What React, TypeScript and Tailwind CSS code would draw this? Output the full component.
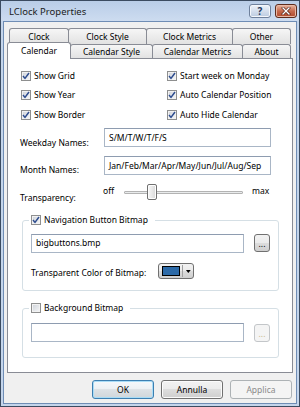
import React from "react";

function CheckBox({ checked = true }: { checked?: boolean }) {
  return (
    <span className="flex w-[10px] h-[10px] shrink-0 items-center justify-center border border-[#8e8f8f] bg-linear-to-br from-[#cdd1d8] to-[#f7f8f9] shadow-[inset_0_0_0_1px_#f2f2f2]">
      {checked && (
        <svg width="8" height="8" viewBox="0 0 8 8">
          <path d="M1 4 L3 6.4 L7 1" fill="none" stroke="#2d4c8e" strokeWidth="1.5" />
        </svg>
      )}
    </span>
  );
}

function Check({ label, checked = true }: { label: string; checked?: boolean }) {
  return (
    <div className="flex items-center gap-[3px]">
      <CheckBox checked={checked} />
      <span className="text-[8.5px] leading-[12px] whitespace-nowrap">{label}</span>
    </div>
  );
}

function Tab({ label, w, first }: { label: string; w: number; first?: boolean }) {
  return (
    <div
      style={{ width: w }}
      className={`${first ? "" : "-ml-px"} h-[16px] shrink-0 flex items-center justify-center rounded-t-[3px] border border-b-0 border-[#898c95] bg-linear-to-b from-[#f6f6f6] to-[#e2e2e2] text-[8.5px] leading-[12px]`}
    >
      {label}
    </div>
  );
}

function TabLow({ label, w }: { label: string; w: number }) {
  return (
    <div
      style={{ width: w }}
      className="-ml-px mt-[2px] h-[14px] shrink-0 flex items-center justify-center rounded-t-[3px] border border-b-0 border-[#898c95] bg-linear-to-b from-[#f6f6f6] to-[#e2e2e2] text-[8.5px] leading-[12px]"
    >
      {label}
    </div>
  );
}

function TextBox({ value, w, h = 19 }: { value?: string; w: number; h?: number }) {
  return (
    <div
      style={{ width: w, height: h }}
      className="shrink-0 flex items-center overflow-hidden whitespace-nowrap bg-white border border-[#a9b6c6] border-t-[#8e9cb0] pl-[4px] text-[8.5px] leading-[12px]"
    >
      {value}
    </div>
  );
}

function DotsButton({ disabled }: { disabled?: boolean }) {
  return (
    <div
      className={`w-[16px] h-[18px] shrink-0 flex items-end justify-center pb-[3px] rounded-[3px] border text-[8.5px] leading-[8px] ${
        disabled
          ? "border-[#c3c6c9] bg-[#f4f4f4] text-[#c9b98a]"
          : "border-[#707070] bg-[linear-gradient(#f2f2f2_0%,#ebebeb_50%,#dddddd_50%,#cfcfcf_100%)] text-black"
      }`}
    >
      ...
    </div>
  );
}

function Button({ label, def, disabled }: { label: string; def?: boolean; disabled?: boolean }) {
  return (
    <div
      className={`w-[62px] h-[19px] flex items-center justify-center rounded-[3px] border text-[8.5px] leading-[12px] ${
        disabled
          ? "border-[#adb2b5] bg-[#f4f4f4] text-[#8a8a8a]"
          : def
          ? "border-[#3c7fb1] bg-[linear-gradient(#f4f8fb_0%,#ecf0f3_50%,#dde2e6_50%,#d0d6da_100%)] shadow-[inset_0_0_0_1px_#a9dcf6]"
          : "border-[#707070] bg-[linear-gradient(#f2f2f2_0%,#ebebeb_50%,#dddddd_50%,#cfcfcf_100%)] shadow-[inset_0_0_0_1px_#fbfbfb]"
      }`}
    >
      {label}
    </div>
  );
}

export default function App() {
  return (
    <div className="w-[300px] h-[407px] flex flex-col overflow-hidden border border-[#3b4b60] bg-[#c4d5eb] font-['Noto_Sans',sans-serif] text-black">
      {/* Title bar */}
      <div className="h-[20px] shrink-0 flex items-center pl-[8px] pr-[2px] bg-linear-to-b from-[#b9cde7] to-[#cddcf0]">
        <span className="mt-[2px] text-[9.5px] leading-[14px] text-[#1b1b1b]">LClock Properties</span>
        <div className="ml-auto flex gap-[4px]">
          <div className="w-[22px] h-[14px] flex items-center justify-center rounded-[3px] border border-[#6f819c] bg-linear-to-b from-[#eef3fa] to-[#bccbe0] shadow-[inset_0_0_0_1px_#f4f7fb]">
            <span className="text-[10px] leading-[10px] font-bold text-[#27395c]">?</span>
          </div>
          <div className="w-[22px] h-[14px] flex items-center justify-center rounded-[3px] border border-[#5e2c1d] bg-linear-to-b from-[#e8b8a3] via-[#c66a4d] to-[#b04a2d] shadow-[inset_0_0_0_1px_#e9b9a5]">
            <svg width="10" height="8" viewBox="0 0 10 8">
              <path d="M2 1 L8 7 M8 1 L2 7" stroke="#4a1a10" strokeWidth="2.6" strokeLinecap="square" />
              <path d="M2 1 L8 7 M8 1 L2 7" stroke="#ffffff" strokeWidth="1.4" strokeLinecap="square" />
            </svg>
          </div>
        </div>
      </div>

      {/* Client */}
      <div className="flex-1 flex px-[2px] pb-[2px]">
        <div className="flex-1 flex flex-col border border-[#6f8db5] bg-[#f0f0f0] px-[3px] pt-[6px]">
          {/* Tabs */}
          <div className="h-[30px] flex flex-col">
            <div className="flex ml-[2px]">
              <Tab label="Clock" w={60} first />
              <Tab label="Clock Style" w={79} />
              <Tab label="Clock Metrics" w={87} />
              <Tab label="Other" w={59} />
            </div>
            <div className="relative z-10 flex items-start -mt-[2px]">
              <div className="w-[64px] h-[17px] shrink-0 flex items-center justify-center pb-[1px] rounded-t-[3px] border border-b-0 border-[#898c95] bg-white text-[8.5px] leading-[12px]">
                Calendar
              </div>
              <TabLow label="Calendar Style" w={83} />
              <TabLow label="Calendar Metrics" w={91} />
              <TabLow label="About" w={49} />
            </div>
          </div>

          {/* Panel */}
          <div className="h-[315px] shrink-0 flex flex-col border border-[#898c95] bg-white">
            <div className="grid grid-cols-[146px_1fr] auto-rows-[19.5px] items-center pl-[13px] pt-[7px]">
              <Check label="Show Grid" />
              <Check label="Start week on Monday" />
              <Check label="Show Year" />
              <Check label="Auto Calendar Position" />
              <Check label="Show Border" />
              <Check label="Auto Hide Calendar" />
            </div>

            <div className="flex mt-[3.5px] pl-[12px]">
              <span className="w-[84px] pt-[9px] text-[8.5px] leading-[12px]">Weekday Names:</span>
              <TextBox value="S/M/T/W/T/F/S" w={167} />
            </div>
            <div className="flex mt-[7px] pl-[12px]">
              <span className="w-[84px] pt-[8px] text-[8.5px] leading-[12px]">Month Names:</span>
              <TextBox value="Jan/Feb/Mar/Apr/May/Jun/Jul/Aug/Sep" w={167} />
            </div>
            <div className="flex mt-[8px] pl-[12px] h-[16px]">
              <span className="w-[84px] pt-[8px] text-[8.5px] leading-[12px]">Transparency:</span>
              <span className="-ml-[1px] w-[21px] mt-[1px] text-[8.5px] leading-[12px]">off</span>
              <div className="relative w-[119px] h-[16px]">
                <div className="absolute left-0 right-0 top-[7px] h-[3px] rounded-[1px] border border-[#b3b3b3] bg-[#e9ebec]" />
                <div className="absolute left-[23px] top-0 w-[10px] h-[16px] rounded-[2px] border border-[#707070] bg-linear-to-r from-[#f8f8f8] to-[#d9d9d9] shadow-[inset_0_0_0_1px_#fdfdfd]" />
              </div>
              <span className="ml-[9px] mt-[1px] text-[8.5px] leading-[12px]">max</span>
            </div>

            {/* Group 1 */}
            <fieldset className="mt-[14px] ml-[14px] mr-[13px] border border-[#d5dfe5] rounded-[3px]">
              <legend className="ml-[6px] pl-[2px] pr-[7px]">
                <Check label="Navigation Button Bitmap" />
              </legend>
              <div className="flex items-center pl-[8px] mt-[7.5px]">
                <TextBox value="bigbuttons.bmp" w={213} />
                <div className="ml-[10px]">
                  <DotsButton />
                </div>
              </div>
              <div className="flex items-center pl-[8px] mt-[10.5px] pb-[11px]">
                <span className="w-[127px] mt-[3px] text-[8.5px] leading-[12px] whitespace-nowrap">Transparent Color of Bitmap:</span>
                <div className="w-[36px] h-[16px] flex items-center rounded-[3px] border border-[#707070] bg-[linear-gradient(#f2f2f2_0%,#ebebeb_50%,#dddddd_50%,#cfcfcf_100%)]">
                  <div className="ml-[3px] w-[19px] h-[10px] border border-black bg-[#2c6aa8]" />
                  <div className="ml-[2px] w-px h-[12px] bg-[#a0a0a0]" />
                  <svg width="9" height="5" viewBox="0 0 9 5" className="ml-[1px]">
                    <path d="M2 1 L7 1 L4.5 4 Z" fill="#000" />
                  </svg>
                </div>
              </div>
            </fieldset>

            {/* Group 2 */}
            <fieldset className="mt-[11px] ml-[14px] mr-[13px] border border-[#d5dfe5] rounded-[3px]">
              <legend className="ml-[6px] pl-[2px] pr-[7px]">
                <Check label="Background Bitmap" checked={false} />
              </legend>
              <div className="flex items-center pl-[8px] mt-[9px] pb-[15px]">
                <TextBox w={213} />
                <div className="ml-[10px]">
                  <DotsButton disabled />
                </div>
              </div>
            </fieldset>
          </div>

          {/* Buttons */}
          <div className="flex justify-end gap-[7px] mt-[7px] pr-[1px]">
            <Button label="OK" def />
            <Button label="Annulla" />
            <Button label="Applica" disabled />
          </div>
        </div>
      </div>
    </div>
  );
}
